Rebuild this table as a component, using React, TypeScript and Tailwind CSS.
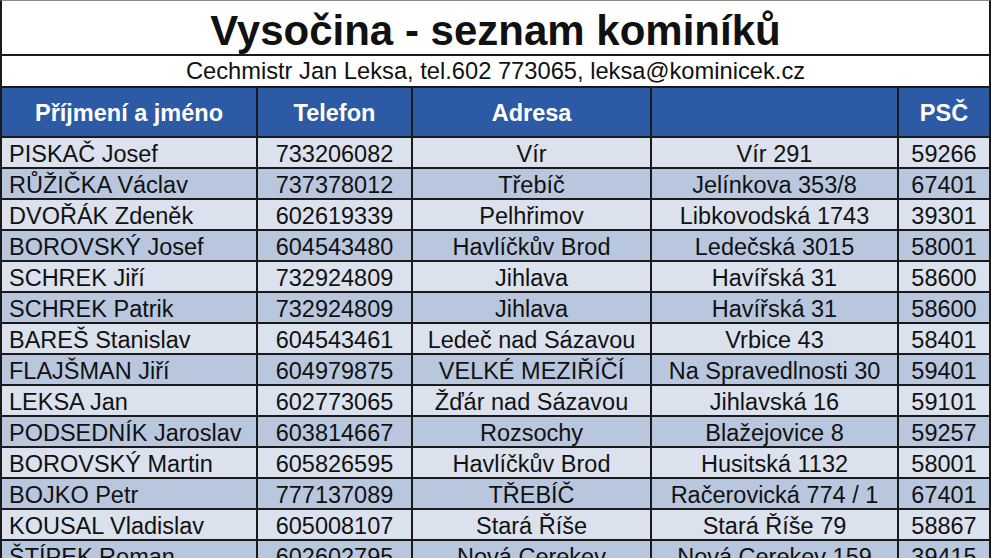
import React from "react"

// řádky tabulky kominíků
const rows: [string, string, string, string, string][] = [
  ["PISKAČ Josef", "733206082", "Vír", "Vír 291", "59266"],
  ["RŮŽIČKA Václav", "737378012", "Třebíč", "Jelínkova 353/8", "67401"],
  ["DVOŘÁK Zdeněk", "602619339", "Pelhřimov", "Libkovodská 1743", "39301"],
  ["BOROVSKÝ Josef", "604543480", "Havlíčkův Brod", "Ledečská 3015", "58001"],
  ["SCHREK Jiří", "732924809", "Jihlava", "Havířská 31", "58600"],
  ["SCHREK Patrik", "732924809", "Jihlava", "Havířská 31", "58600"],
  ["BAREŠ Stanislav", "604543461", "Ledeč nad Sázavou", "Vrbice 43", "58401"],
  ["FLAJŠMAN Jiří", "604979875", "VELKÉ MEZIŘÍČÍ", "Na Spravedlnosti 30", "59401"],
  ["LEKSA Jan", "602773065", "Žďár nad Sázavou", "Jihlavská 16", "59101"],
  ["PODSEDNÍK Jaroslav", "603814667", "Rozsochy", "Blažejovice 8", "59257"],
  ["BOROVSKÝ Martin", "605826595", "Havlíčkův Brod", "Husitská 1132", "58001"],
  ["BOJKO Petr", "777137089", "TŘEBÍČ", "Račerovická 774 / 1", "67401"],
  ["KOUSAL Vladislav", "605008107", "Stará Říše", "Stará Říše 79", "58867"],
  ["ŠTÍPEK Roman", "602602795", "Nová Cerekev", "Nová Cerekev 159", "39415"],
]

const headers = ["Příjmení a jméno", "Telefon", "Adresa", "", "PSČ"]

export default function App() {
  return (
    <div className="w-[991px] h-[558px] overflow-hidden bg-white border-x-2 border-x-[#1a1a1a] border-t border-t-[#8a8a8a] font-['Liberation_Sans',Arial,sans-serif] text-[#111]">
      {/* nadpis */}
      <div className="h-[55px] flex items-center justify-center border-b-2 border-[#1a1a1a] text-[42px] font-bold leading-none pt-[6px]">
        Vysočina - seznam kominíků
      </div>
      <div className="h-[32px] flex items-center justify-center border-b-2 border-[#1a1a1a] text-[23.7px] leading-none pt-[2px]">
        Cechmistr Jan Leksa, tel.602 773065, leksa@kominicek.cz
      </div>

      {/* tabulka */}
      <div className="grid grid-cols-[256px_155px_239px_247px_1fr]">
        {headers.map((h, i) => (
          <div
            key={i}
            className={
              "h-[50px] flex items-center justify-center bg-[#2d5aa5] text-white font-bold text-[23.5px] leading-none pt-[4px] border-b-2 border-[#1a1a1a] " +
              (i < 4 ? "border-r-2" : "")
            }
          >
            {h}
          </div>
        ))}
        {rows.map((r, ri) =>
          r.map((c, ci) => (
            <div
              key={ri + "-" + ci}
              className={
                "h-[31px] flex items-center text-[23.5px] leading-none pt-[4px] border-b-2 border-[#1a1a1a] " +
                (ri % 2 === 0 ? "bg-[#dbe1ed] " : "bg-[#b8c7de] ") +
                (ci === 0 ? "justify-start pl-[7px] " : "justify-center ") +
                (ci < 4 ? "border-r-2" : "")
              }
            >
              {c}
            </div>
          ))
        )}
      </div>
    </div>
  )
}
